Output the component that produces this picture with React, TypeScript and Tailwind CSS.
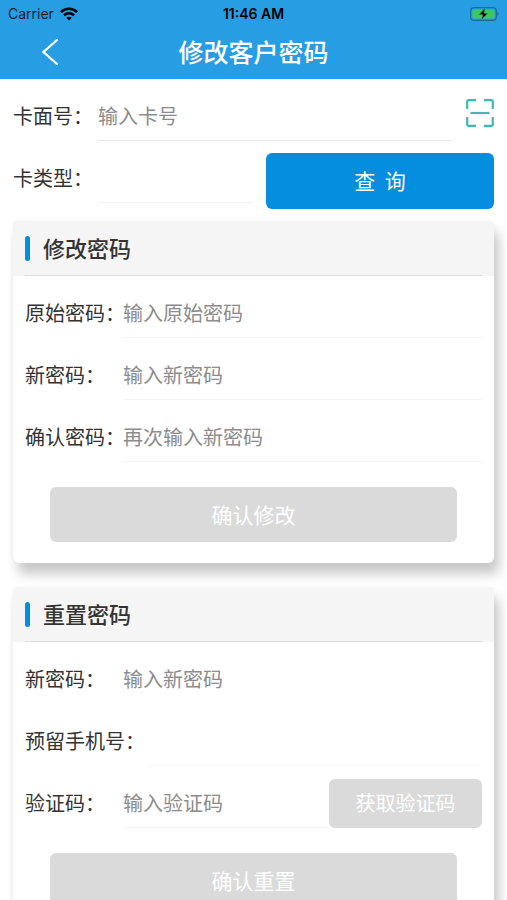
import { useState } from "react"
import type { ReactNode } from "react"

interface FieldProps {
  id: string
  label: string
  placeholder?: string
  type?: string
  labelClass?: string
  lineClass?: string
  children?: ReactNode
}

function Field({
  id,
  label,
  placeholder,
  type = "text",
  labelClass = "w-[98px]",
  lineClass = "border-[#f3f3f3]",
  children,
}: FieldProps) {
  const [value, setValue] = useState("")

  return (
    <div className="flex items-center">
      <label htmlFor={id} className={`shrink-0 whitespace-nowrap text-xl text-[#333] ${labelClass}`}>
        {label}
      </label>
      <input
        id={id}
        type={type}
        value={value}
        placeholder={placeholder}
        onChange={(e) => setValue(e.target.value)}
        className={`h-[50px] min-w-0 flex-1 border-b bg-transparent text-xl text-[#333] outline-none placeholder:text-[#8c8c8c] ${lineClass}`}
      />
      {children}
    </div>
  )
}

function Card({ title, children }: { title: string; children: ReactNode }) {
  return (
    <section className="rounded-md bg-white pb-[21px] shadow-[5px_11px_12px_#c8c8c8,0_0_4px_#f4f4f4]">
      <div className="rounded-t-sm bg-[#f5f5f5] px-3">
        <div className="flex h-[55px] items-center gap-[13px] border-b border-[#dcdcdc]">
          <span className="h-[25px] w-[5px] rounded-sm bg-[#058de0]" />
          <h2 className="pb-0.5 text-[22px] font-medium text-[#333]">{title}</h2>
        </div>
      </div>
      <div className="flex flex-col gap-3 px-3 pt-3">{children}</div>
    </section>
  )
}

function SubmitButton({ children }: { children: ReactNode }) {
  return (
    <button
      type="button"
      className="mx-[25px] mt-[13px] h-[55px] rounded-md bg-[#dadada] text-[21px] font-normal text-white"
    >
      {children}
    </button>
  )
}

function StatusBar() {
  return (
    <div className="grid h-7 grid-cols-3 items-center px-2 font-['Inter',sans-serif] text-sm text-[#10202c]">
      <div className="flex items-center gap-1.5">
        <span>Carrier</span>
        <svg width="18" height="14" viewBox="0 0 18 14" fill="none" stroke="#000" strokeWidth="2.6">
          <path d="M0.9 5.1C5.4 0.6 12.6 0.6 17.1 5.1" />
          <path d="M4 8.3C6.8 5.6 11.2 5.6 14 8.3" />
          <path d="M9 13.6L6.2 10.8C7.8 9.4 10.2 9.4 11.8 10.8Z" fill="#000" stroke="none" />
        </svg>
      </div>
      <span className="text-center font-semibold text-black">11:46 AM</span>
      <div className="flex justify-end">
        <svg width="30" height="14" viewBox="0 0 30 14" fill="none">
          <rect x="1.7" y="0.7" width="25.6" height="12.6" rx="3.4" stroke="#1b6a9d" strokeWidth="1.2" />
          <rect x="3.4" y="2.4" width="22.2" height="9.2" rx="1.8" fill="#3ac860" />
          <path d="M28.3 4.8C30 5.5 30 8.5 28.3 9.2Z" fill="#1b6a9d" />
          <path d="M16.4 1L9.8 7.8H13.700L12.3 13L18.900 6.200H15Z" fill="#000" stroke="#3ac860" strokeWidth="0.5" />
        </svg>
      </div>
    </div>
  )
}

export default function App() {
  return (
    <div className="min-h-screen overflow-x-hidden bg-white pb-6 font-['Noto_Sans_CJK_SC',sans-serif]">
      <header className="bg-[#279de3]">
        <StatusBar />
        <div className="grid h-[51px] grid-cols-[80px_1fr_80px] items-center pb-1">
          <button type="button" aria-label="返回" className="flex h-full items-center justify-end pr-[22px]">
            <svg width="16" height="26" viewBox="0 0 16 26" fill="none" stroke="#fff" strokeWidth="2.2">
              <path d="M15 1L1.5 13L15 25" strokeLinecap="round" />
            </svg>
          </button>
          <h1 className="pb-0.5 text-center text-[25px] leading-8 font-medium text-white">修改客户密码</h1>
        </div>
      </header>

      <main className="flex flex-col gap-3 px-[13px] pt-3">
        <Field id="card-no" label="卡面号：" placeholder="输入卡号" labelClass="w-[85px]" lineClass="border-[#ececec]">
          <button type="button" aria-label="扫描" className="flex w-[41px] shrink-0 justify-end pb-1.5">
            <svg width="28" height="28" viewBox="0 0 28 28" fill="none" stroke="#3dbab5" strokeWidth="2.2">
              <path d="M1.2 10V2.700Q1.2 1.2 2.700 1.2H10M18 1.2H25.300Q26.8 1.2 26.8 2.700V10M26.8 18V25.300Q26.8 26.8 25.300 26.8H18M10 26.8H2.700Q1.2 26.8 1.2 25.300V18" />
              <path d="M4.500 14H23.500" />
            </svg>
          </button>
        </Field>

        <div className="flex items-start gap-[14px]">
          <div className="min-w-0 flex-1">
            <Field id="card-type" label="卡类型：" labelClass="w-[85px]" />
          </div>
          <button
            type="button"
            className="h-14 w-[47.4%] shrink-0 rounded-md bg-[#058de0] text-[21px] text-white"
          >
            查&nbsp;&nbsp;询
          </button>
        </div>

        <div className="flex flex-col gap-6">
          <Card title="修改密码">
            <Field id="old-password" type="password" label="原始密码：" placeholder="输入原始密码" />
            <Field id="new-password" type="password" label="新密码：" placeholder="输入新密码" />
            <Field id="confirm-password" type="password" label="确认密码：" placeholder="再次输入新密码" />
            <SubmitButton>确认修改</SubmitButton>
          </Card>

          <Card title="重置密码">
            <Field
              id="reset-password"
              type="password"
              label="新密码："
              placeholder="输入新密码"
              lineClass="border-transparent"
            />
            <Field id="phone" type="tel" label="预留手机号：" labelClass="w-[123px]" lineClass="border-[#f7f7f7]" />
            <Field id="code" label="验证码：" placeholder="输入验证码">
              <button
                type="button"
                className="ml-0.5 h-[49px] w-[153px] shrink-0 rounded-md bg-[#dadada] text-xl text-white"
              >
                获取验证码
              </button>
            </Field>
            <SubmitButton>确认重置</SubmitButton>
          </Card>
        </div>
      </main>
    </div>
  )
}
